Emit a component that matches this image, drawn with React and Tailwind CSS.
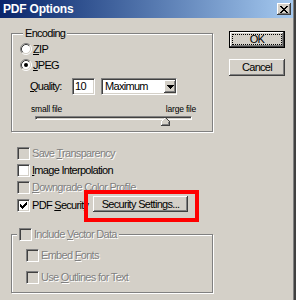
import React from "react";

const FACE = "#d4d0c8";

function CheckMark() {
  const cols = [2, 3, 4, 3, 2, 1, 0];
  return (
    <svg width="7" height="7" viewBox="0 0 7 7" shapeRendering="crispEdges">
      {cols.map((y, x) => (
        <rect key={x} x={x} y={y} width="1" height="3" fill="#000" />
      ))}
    </svg>
  );
}

function Check({ checked, disabled }) {
  return (
    <span
      className={
        "w-[13px] h-[13px] shrink-0 flex items-center justify-center border border-t-[#808080] border-l-[#808080] border-b-white border-r-white shadow-[inset_1px_1px_0_#404040,inset_-1px_-1px_0_#d4d0c8] " +
        (disabled ? "bg-[#d4d0c8]" : "bg-white")
      }
    >
      {checked ? <CheckMark /> : null}
    </span>
  );
}

function Radio({ checked }) {
  return (
    <svg width="12" height="12" viewBox="0 0 12 12" className="shrink-0">
      <circle cx="6" cy="6" r="4.5" fill="#fff" />
      <path d="M2.11 9.89 A5.5 5.5 0 0 1 9.89 2.11" fill="none" stroke="#808080" />
      <path d="M9.89 2.11 A5.5 5.5 0 0 1 2.11 9.89" fill="none" stroke="#fff" />
      <path d="M2.82 9.18 A4.5 4.5 0 0 1 9.18 2.82" fill="none" stroke="#404040" />
      <path d="M9.18 2.82 A4.5 4.5 0 0 1 2.82 9.18" fill="none" stroke="#d4d0c8" />
      {checked ? <circle cx="6" cy="6" r="2" fill="#000" /> : null}
    </svg>
  );
}

function Dis({ children }) {
  return <span className="text-[#808080] [text-shadow:1px_1px_0_#fff]">{children}</span>;
}

function CheckRow({ checked, disabled, children }) {
  return (
    <div className="h-[17px] flex items-center">
      <Check checked={checked} disabled={disabled} />
      <span className="ml-[2px] whitespace-nowrap">{disabled ? <Dis>{children}</Dis> : children}</span>
    </div>
  );
}

const raised =
  "bg-[#d4d0c8] shadow-[inset_-1px_-1px_0_#404040,inset_1px_1px_0_#fff,inset_-2px_-2px_0_#808080,inset_2px_2px_0_#d4d0c8]";
const sunken =
  "border border-t-[#808080] border-l-[#808080] border-b-white border-r-white shadow-[inset_1px_1px_0_#404040,inset_-1px_-1px_0_#d4d0c8]";
const etched = "border border-[#808080] shadow-[inset_1px_1px_0_#fff,1px_1px_0_#fff]";

function CloseX() {
  const rows = [
    [0, 1, 6, 7],
    [1, 2, 5, 6],
    [2, 3, 4, 5],
    [3, 4],
    [2, 3, 4, 5],
    [1, 2, 5, 6],
    [0, 1, 6, 7],
  ];
  return (
    <svg width="8" height="7" viewBox="0 0 8 7" shapeRendering="crispEdges">
      {rows.map((r, y) => r.map((x) => <rect key={y + "-" + x} x={x} y={y} width="1" height="1" fill="#000" />))}
    </svg>
  );
}

export default function App() {
  return (
    <div className="w-[296px] h-[300px] bg-[#d4d0c8] flex flex-col text-black text-[11px] leading-[13px] tracking-[-0.7px] font-['Liberation_Sans',Arial,sans-serif] border-r-2 border-r-[#404040] shadow-[inset_-1px_0_0_#808080] overflow-hidden">
      {/* Title bar */}
      <div className="h-[18px] shrink-0 flex items-center bg-gradient-to-r from-[#0a246a] to-[#a6caf0] pl-[3px] pr-[2px] mr-[1px]">
        <span className="text-white font-bold text-[12px] tracking-[-0.2px]">PDF Options</span>
        <span className={"ml-auto w-[14px] h-[12px] flex items-center justify-center " + raised}>
          <CloseX />
        </span>
      </div>

      <div className="flex flex-1">
        {/* Left column */}
        <div className="ml-[11px] w-[203px] flex flex-col">
          {/* Encoding group */}
          <div className={"mt-[15px] h-[99px] w-[202px] relative pt-[7px] pl-[8px] " + etched}>
            <span className="absolute left-[11px] top-[-7px] px-[2px] bg-[#d4d0c8]">Encoding</span>
            <div className="h-[16px] flex items-center">
              <Radio />
              <span className="ml-[1px]">
                <u>Z</u>IP
              </span>
            </div>
            <div className="h-[16px] flex items-center">
              <Radio checked />
              <span className="ml-[1px]">
                <u>J</u>PEG
              </span>
            </div>
            <div className="mt-[5px] h-[17px] flex items-center">
              <span className="ml-[10px] w-[42px]">
                <u>Q</u>uality:
              </span>
              <div className={"w-[23px] h-[17px] bg-white pl-[2px] flex items-center " + sunken}>10</div>
              <div className={"ml-[6px] w-[76px] h-[17px] bg-white flex items-center " + sunken}>
                <span className="pl-[3px] flex-1">Maximum</span>
                <span className={"w-[12px] h-[13px] flex items-center justify-center " + raised}>
                  <svg width="7" height="4" viewBox="0 0 7 4" shapeRendering="crispEdges">
                    <path d="M0 0h7v1h-1v1h-1v1h-1v1h-1v-1h-1v-1h-1v-1h-1z" fill="#000" />
                  </svg>
                </span>
              </div>
            </div>
            <div className="mt-[9px] ml-[11px] w-[165px] h-[10px] flex justify-between items-center text-[8.5px] tracking-[-0.2px]">
              <span>small file</span>
              <span>large file</span>
            </div>
            <div className={"relative mt-[2px] ml-[15px] w-[157px] h-[4px] " + sunken}>
              <svg
                width="9"
                height="9"
                viewBox="0 0 9 9"
                className="absolute left-[125px] top-[0px]"
                shapeRendering="crispEdges"
              >
                <path d="M0 4 L4 0 L8 4 V8.5 H0 Z" fill={FACE} />
                <path d="M0.5 8 V4.5 L4.5 0.5" fill="none" stroke="#fff" />
                <path d="M4.5 0.5 L8.5 4.5 V8.5 H0" fill="none" stroke="#404040" />
                <path d="M7.5 5 V7.5 H1" fill="none" stroke="#808080" />
              </svg>
            </div>
          </div>

          {/* Checkboxes */}
          <div className="mt-[13px] ml-[6px] flex flex-col">
            <CheckRow disabled>
              Save <u>T</u>ransparency
            </CheckRow>
            <CheckRow>
              <u>I</u>mage Interpolation
            </CheckRow>
            <CheckRow disabled>
              <u>D</u>owngrade Color Profile
            </CheckRow>
            <div className="h-[16px] flex items-start">
              <span className="mt-[3px] flex items-center">
                <Check checked />
              </span>
              <span className="ml-[2px] w-[61px] mt-[3px] whitespace-nowrap">
                PDF <u>S</u>ecurity
              </span>
              <div className="relative">
                <div className={"w-[95px] h-[16px] flex items-center justify-center " + raised}>
                  Security Settings...
                </div>
                <div className="absolute left-[-9px] right-[-11px] top-[-6px] bottom-[-10px] border-4 border-[#ff0000]" />
              </div>
            </div>
          </div>

          {/* Include Vector Data group */}
          <div className={"mt-[22px] h-[59px] w-[202px] relative pt-[12px] pl-[14px] " + etched}>
            <div className="absolute left-[5px] top-[-8px] px-[2px] bg-[#d4d0c8] h-[15px] flex items-center">
              <Check disabled />
              <span className="ml-[2px] whitespace-nowrap">
                <Dis>
                  Include <u>V</u>ector Data
                </Dis>
              </span>
            </div>
            <CheckRow disabled>
              Embed <u>F</u>onts
            </CheckRow>
            <div className="mt-[5px]">
              <CheckRow disabled>
                Use <u>O</u>utlines for Text
              </CheckRow>
            </div>
          </div>
        </div>

        {/* Right column */}
        <div className="ml-[15px] w-[56px] flex flex-col">
          <div className="mt-[13px] h-[17px] border border-black">
            <div className={"w-full h-full p-[2px] " + raised}>
              <div className="w-full h-full border border-dotted border-black flex items-center justify-center">
                OK
              </div>
            </div>
          </div>
          <div className={"mt-[11px] h-[17px] flex items-center justify-center " + raised}>Cancel</div>
        </div>
      </div>
    </div>
  );
}
